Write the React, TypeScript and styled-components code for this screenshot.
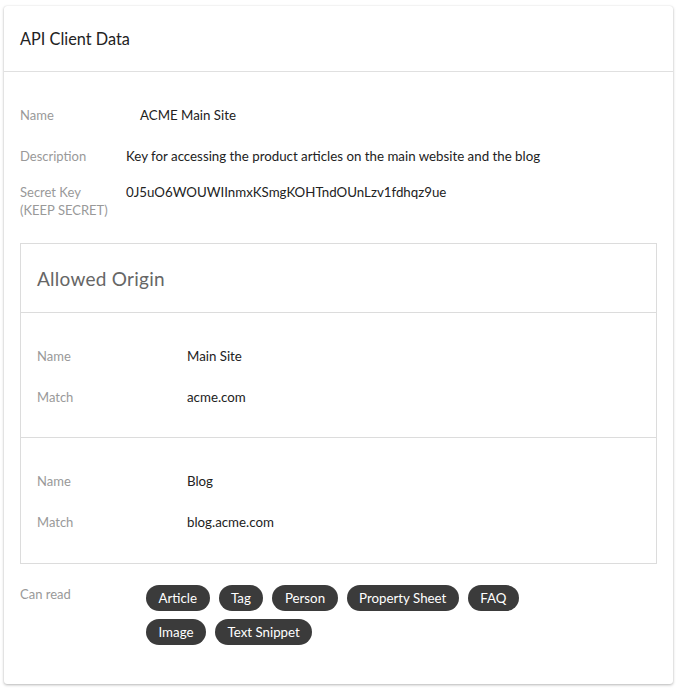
import React from "react";
import styled, { createGlobalStyle } from "styled-components";

const Global = createGlobalStyle`
  html, body { margin: 0; padding: 0; background: #fff; }
  body { font-family: Lato, "Noto Sans", sans-serif; -webkit-font-smoothing: antialiased; }
  * { box-sizing: border-box; }
`;

const Page = styled.div`
  padding: 6px 7px 6px 4px;
`;

const Card = styled.div`
  width: 669px;
  height: 678px;
  background: #fff;
  border-radius: 3px;
  box-shadow: 0 1px 3px rgba(0, 0, 0, 0.28), 0 0 1px rgba(0, 0, 0, 0.12);
  display: flex;
  flex-direction: column;
`;

const CardHeader = styled.div`
  height: 66px;
  padding: 0 16px;
  display: flex;
  align-items: center;
  border-bottom: 1px solid #e0e0e0;
  font-size: 16.3px;
  color: #222;
`;

const CardBody = styled.div`
  padding: 34px 16px 0 16px;
  display: flex;
  flex-direction: column;
`;

const Row = styled.div<{ $gap?: number }>`
  display: flex;
  align-items: baseline;
  margin-bottom: ${(p) => p.$gap ?? 18}px;
`;

const Label = styled.div<{ $width: number }>`
  width: ${(p) => p.$width}px;
  flex: none;
  font-size: 13px;
  line-height: 18px;
  color: #999;
`;

const Value = styled.div`
  font-size: 13.3px;
  line-height: 18px;
  color: #222;
`;

const OriginBox = styled.div`
  margin-top: 6px;
  border: 1px solid #dcdcdc;
`;

const OriginHeader = styled.div`
  height: 69px;
  padding: 0 16px;
  display: flex;
  align-items: center;
  border-bottom: 1px solid #dcdcdc;
  font-size: 19px;
  letter-spacing: 0.25px;
  color: #666;
`;

const OriginSection = styled.div<{ $last?: boolean }>`
  height: 125px;
  padding: 34px 16px 0 16px;
  border-bottom: ${(p) => (p.$last ? "none" : "1px solid #dcdcdc")};
`;

const CanRead = styled.div`
  margin-top: 21px;
  display: flex;
  align-items: flex-start;
`;

const CanReadLabel = styled.div`
  width: 126px;
  flex: none;
  font-size: 13px;
  line-height: 18px;
  color: #999;
  padding-top: 0;
`;

const Chips = styled.div`
  display: flex;
  flex-wrap: wrap;
  column-gap: 9px;
  row-gap: 8px;
  width: 380px;
`;

const Chip = styled.span`
  height: 26px;
  padding: 0 12.5px;
  border-radius: 13px;
  background: #3b3b3b;
  color: #fff;
  font-size: 13.3px;
  display: inline-flex;
  align-items: center;
`;

const origins = [
  { name: "Main Site", match: "acme.com" },
  { name: "Blog", match: "blog.acme.com" },
];

const perms = ["Article", "Tag", "Person", "Property Sheet", "FAQ", "Image", "Text Snippet"];

export default function App() {
  return (
    <>
      <Global />
      <Page>
        <Card>
          <CardHeader>API Client Data</CardHeader>
          <CardBody>
            <Row $gap={23}>
              <Label $width={120}>Name</Label>
              <Value>ACME Main Site</Value>
            </Row>
            <Row $gap={18}>
              <Label $width={106}>Description</Label>
              <Value>Key for accessing the product articles on the main website and the blog</Value>
            </Row>
            <Row $gap={18}>
              <Label $width={106}>
                Secret Key
                <br />
                (KEEP SECRET)
              </Label>
              <Value>0J5uO6WOUWIInmxKSmgKOHTndOUnLzv1fdhqz9ue</Value>
            </Row>
            <OriginBox>
              <OriginHeader>Allowed Origin</OriginHeader>
              {origins.map((o, i) => (
                <OriginSection key={o.name} $last={i === origins.length - 1}>
                  <Row $gap={23}>
                    <Label $width={150}>Name</Label>
                    <Value>{o.name}</Value>
                  </Row>
                  <Row $gap={0}>
                    <Label $width={150}>Match</Label>
                    <Value>{o.match}</Value>
                  </Row>
                </OriginSection>
              ))}
            </OriginBox>
            <CanRead>
              <CanReadLabel>Can read</CanReadLabel>
              <Chips>
                {perms.map((p) => (
                  <Chip key={p}>{p}</Chip>
                ))}
              </Chips>
            </CanRead>
          </CardBody>
        </Card>
      </Page>
    </>
  );
}
